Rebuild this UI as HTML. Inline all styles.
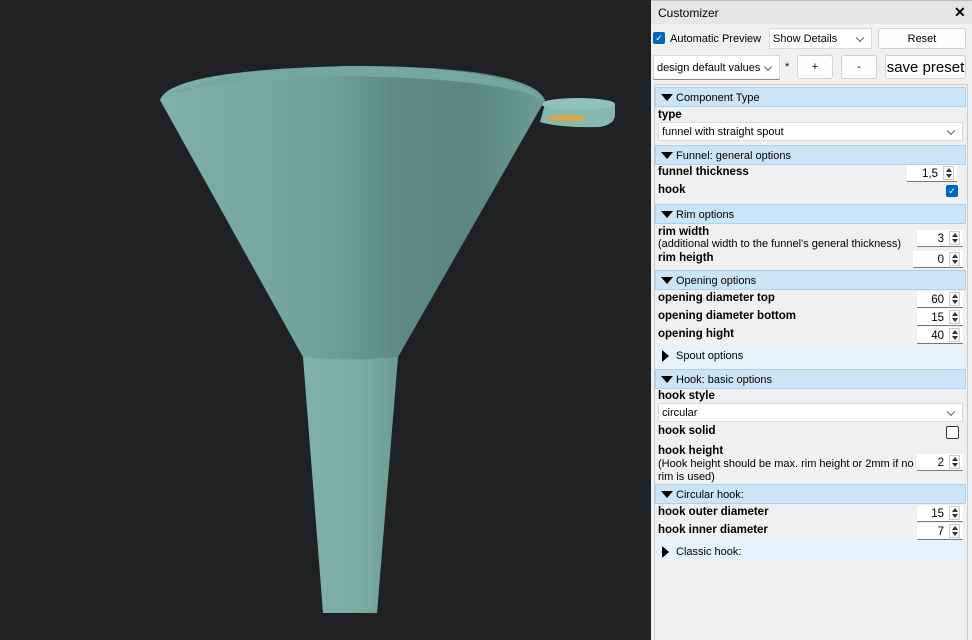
<!DOCTYPE html>
<html><head><style>
body{margin:0;width:972px;height:640px;overflow:hidden;background:#1f2123;font-family:"Liberation Sans",sans-serif;font-size:11px;color:#000;position:relative}
.a{position:absolute}
#p{left:651px;top:0;width:321px;height:640px;background:#f0f0f0}
.btn{position:absolute;background:#fdfdfd;border:1px solid #d0d0d0;border-radius:3px;text-align:center;box-sizing:border-box}
.sel{position:absolute;background:#fff;border:1px solid #d9d9d9;box-sizing:border-box;padding-left:3px}
.sel:after{content:"";position:absolute;right:8px;top:50%;width:5px;height:5px;border-right:1px solid #555;border-bottom:1px solid #555;transform:translateY(-70%) rotate(45deg)}
.hd{position:absolute;left:655px;width:311px;background:#cce4f7;border:1px solid #a8d2f2;box-sizing:border-box;height:20px;line-height:21px;padding-left:20px}
.hd.c{background:#e5f1fb;border-color:#e5f1fb}
.hd:before{content:"";position:absolute;left:5px;top:6px;border-left:6px solid transparent;border-right:6px solid transparent;border-top:7px solid #000}
.hd.c:before{left:6px;top:4px;border-top:6px solid transparent;border-bottom:6px solid transparent;border-left:7px solid #000;border-right:0}
.l{position:absolute;left:658px;font-weight:bold;font-size:11.5px;margin-top:2px}
.n{position:absolute;left:658px;margin-top:1px}
.sp{position:absolute;width:50px;height:17px;background:#fff;border-bottom:1px solid #777;box-sizing:border-box;text-align:right;padding-right:19px;line-height:18px;font-size:11.5px}
.sp i{position:absolute;right:3px;top:1px;width:11px;height:14px;border:1px solid #ccc;box-sizing:border-box;background:#fafafa}
.sp i:before{content:"";position:absolute;left:2px;top:1px;border-left:3px solid transparent;border-right:3px solid transparent;border-bottom:4px solid #333}
.sp i:after{content:"";position:absolute;left:2px;top:7px;border-left:3px solid transparent;border-right:3px solid transparent;border-top:4px solid #333}
.cb{position:absolute;width:12px;height:12px;border-radius:2px;background:#0067c0;color:#fff;font-size:9px;line-height:12px;text-align:center}
</style></head><body>
<svg class="a" style="left:0;top:0" width="651" height="640">
<defs>
<linearGradient id="g" x1="0" x2="1"><stop offset="0" stop-color="#7fb2a6"/><stop offset=".45" stop-color="#6fa095"/><stop offset=".6" stop-color="#5e8c82"/><stop offset=".8" stop-color="#5a867c"/><stop offset="1" stop-color="#6d9e93"/></linearGradient>
<linearGradient id="s" x1="0" x2="1"><stop offset="0" stop-color="#7fb3a7"/><stop offset=".6" stop-color="#7aac9f"/><stop offset="1" stop-color="#6c9d91"/></linearGradient>
</defs>
<path d="M303 357 L323 613 L377 613 L398 357 Z" fill="url(#s)"/>
<path d="M545 104 L540 122 Q560 128 600 127 Q615 124 615 115 L615 104 Q600 98 560 99 Z" fill="#86b9ad"/>
<ellipse cx="578" cy="104" rx="37" ry="6" fill="#8fc3b6"/>
<ellipse cx="567" cy="118" rx="20" ry="3.5" fill="#d4a84f"/>
<path d="M160 100 Q170 70 350 66 Q530 66 545 100 L398 357 Q350 362 303 357 Z" fill="url(#g)"/>
<path d="M160 100 Q200 72 350 66 Q520 66 545 102 Q520 80 350 76 Q190 80 160 100Z" fill="#75a89c"/>
</svg>
<div class="a" id="p"></div>
<div class="a" style="left:651px;top:0;width:321px;height:24px;background:#e6e6e6;border-top:1px solid #bbb;box-sizing:border-box"></div>
<div class="a" style="left:658px;top:6px;font-size:12px">Customizer</div>
<div class="a" style="left:954px;top:4px;font-size:14px;font-weight:bold">✕</div>
<div class="cb" style="left:653px;top:32px">✓</div>
<div class="a" style="left:670px;top:33px">Automatic Preview</div>
<div class="sel" style="left:769px;top:28px;width:103px;height:21px;line-height:20px">Show Details</div>
<div class="btn" style="left:878px;top:28px;width:88px;height:21px;line-height:20px">Reset</div>
<div class="sel" style="left:653px;top:55px;width:127px;height:25px;line-height:24px;border-bottom:1px solid #888">design default values</div>
<div class="a" style="left:785px;top:61px">*</div>
<div class="btn" style="left:797px;top:55px;width:36px;height:24px;line-height:23px">+</div>
<div class="btn" style="left:841px;top:55px;width:36px;height:24px;line-height:23px">-</div>
<div class="btn" style="left:885px;top:55px;width:81px;height:24px;line-height:24px;font-size:15px">save preset</div>
<div class="a" style="left:654px;top:84px;width:314px;height:556px;border:1px solid #ccc;border-bottom:0;box-sizing:border-box"></div>
<div class="hd" style="top:87px">Component Type</div>
<div class="l" style="top:107px">type</div>
<div class="sel" style="left:658px;top:122px;width:305px;height:19px;line-height:19px">funnel with straight spout</div>
<div class="hd" style="top:145px">Funnel: general options</div>
<div class="l" style="top:164px">funnel thickness</div><div class="sp" style="left:907px;top:165px">1,5<i></i></div>
<div class="l" style="top:182px">hook</div><div class="cb" style="left:946px;top:185px">✓</div>
<div class="hd" style="top:204px">Rim options</div>
<div class="l" style="top:224px">rim width</div>
<div class="n" style="top:237px">(additional width to the funnel's general thickness)</div><div class="sp" style="left:917px;top:230px;width:46px">3<i></i></div>
<div class="l" style="top:250px">rim heigth</div><div class="sp" style="left:913px;top:251px">0<i></i></div>
<div class="hd" style="top:270px">Opening options</div>
<div class="l" style="top:290px">opening diameter top</div><div class="sp" style="left:917px;top:291px;width:46px">60<i></i></div>
<div class="l" style="top:308px">opening diameter bottom</div><div class="sp" style="left:917px;top:309px;width:46px">15<i></i></div>
<div class="l" style="top:326px">opening hight</div><div class="sp" style="left:917px;top:327px;width:46px">40<i></i></div>
<div class="hd c" style="top:345px;height:21px">Spout options</div>
<div class="hd" style="top:369px">Hook: basic options</div>
<div class="l" style="top:388px">hook style</div>
<div class="sel" style="left:658px;top:403px;width:305px;height:19px;line-height:19px">circular</div>
<div class="l" style="top:423px">hook solid</div><div class="a" style="left:946px;top:426px;width:11px;height:11px;border:1px solid #333;border-radius:2px;background:#fff"></div>
<div class="l" style="top:443px">hook height</div>
<div class="n" style="top:457px;line-height:13px">(Hook height should be max. rim height or 2mm if no<br>rim is used)</div><div class="sp" style="left:917px;top:454px;width:46px">2<i></i></div>
<div class="hd" style="top:484px">Circular hook:</div>
<div class="l" style="top:504px">hook outer diameter</div><div class="sp" style="left:917px;top:505px;width:46px">15<i></i></div>
<div class="l" style="top:522px">hook inner diameter</div><div class="sp" style="left:917px;top:523px;width:46px">7<i></i></div>
<div class="hd c" style="top:541px;height:21px">Classic hook:</div>
</body></html>
